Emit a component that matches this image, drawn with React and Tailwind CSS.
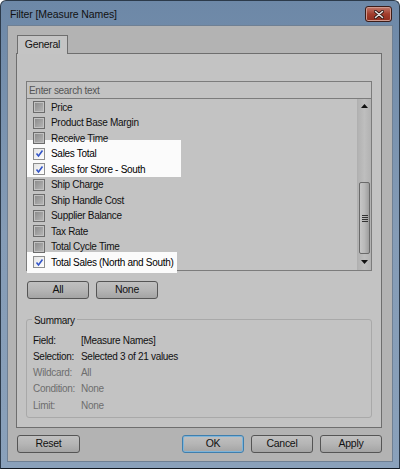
import React from "react";

const FONT = { fontFamily: '"Liberation Sans", Arial, sans-serif' };

const ITEMS = [
  { name: "Price" },
  { name: "Product Base Margin" },
  { name: "Receive Time" },
  { name: "Sales Total", checked: true },
  { name: "Sales for Store - South", checked: true },
  { name: "Ship Charge" },
  { name: "Ship Handle Cost" },
  { name: "Supplier Balance" },
  { name: "Tax Rate" },
  { name: "Total Cycle Time" },
  { name: "Total Sales (North and South)", checked: true },
];

const SUMMARY = [
  { label: "Field:", value: "[Measure Names]" },
  { label: "Selection:", value: "Selected 3 of 21 values" },
  { label: "Wildcard:", value: "All", muted: true },
  { label: "Condition:", value: "None", muted: true },
  { label: "Limit:", value: "None", muted: true },
];

function Checkbox({ checked }) {
  if (checked) {
    return (
      <span className="flex h-[12px] w-[12px] shrink-0 items-center justify-center border border-[#8e8f8f] bg-gradient-to-br from-[#e4e4e4] to-[#ffffff]">
        <svg width="9" height="9" viewBox="0 0 9 9">
          <path d="M1.5 4.5 L3.5 7 L7.5 1.5" fill="none" stroke="#3355c8" strokeWidth="1.6" />
        </svg>
      </span>
    );
  }
  return (
    <span className="flex h-[12px] w-[12px] shrink-0 items-center justify-center border border-[#6c6c6c] bg-[#c2c2c2]">
      <span className="h-[8px] w-[8px] bg-gradient-to-br from-[#8d8d8d] to-[#b3b3b3]" />
    </span>
  );
}

function Button({ children, className = "", focus }) {
  return (
    <button
      className={`flex h-[18px] items-center justify-center rounded-[3px] border bg-gradient-to-b from-[#c0c0c0] via-[#b5b5b5] to-[#a4a4a4] text-[10.5px] text-[#111] ${
        focus ? "border-[#3f7fae] shadow-[inset_0_0_0_1px_#7fb4d8]" : "border-[#555]"
      } ${className}`}
    >
      {children}
    </button>
  );
}

function Scrollbar() {
  return (
    <div className="flex w-[14px] shrink-0 flex-col border-l border-[#b0b0b0] bg-gradient-to-r from-[#b2b2b2] via-[#bebebe] to-[#b2b2b2]">
      <div className="flex h-[14px] items-center justify-center">
        <svg width="7" height="4" viewBox="0 0 7 4">
          <path d="M0 4 L3.5 0 L7 4 Z" fill="#111" />
        </svg>
      </div>
      <div className="h-[69px]" />
      <div className="mx-[1px] flex h-[72px] items-center justify-center rounded-[2px] border border-[#6a6a6a] bg-gradient-to-r from-[#c6c6c6] via-[#b9b9b9] to-[#9e9e9e]">
        <div className="flex flex-col gap-[1px]">
          <span className="h-[1px] w-[6px] bg-[#333]" />
          <span className="h-[1px] w-[6px] bg-[#333]" />
          <span className="h-[1px] w-[6px] bg-[#333]" />
          <span className="h-[1px] w-[6px] bg-[#333]" />
        </div>
      </div>
      <div className="flex flex-1 items-center justify-center">
        <svg width="7" height="4" viewBox="0 0 7 4">
          <path d="M0 0 L7 0 L3.5 4 Z" fill="#111" />
        </svg>
      </div>
    </div>
  );
}

export default function App() {
  return (
    <div
      className="relative flex h-[469px] w-[400px] flex-col overflow-hidden rounded-t-[6px] border border-[#2c3a4a] border-b-[#111820] bg-gradient-to-b from-[#6d88a7] via-[#859cb6] to-[#8aa1bb] tracking-[-0.3px]"
      style={FONT}
    >
      {/* title bar */}
      <div className="flex h-[24px] shrink-0 items-center justify-between pl-[9px] pr-[7px]">
        <span className="pt-[3px] text-[10.5px] tracking-[-0.1px] text-[#111]">Filter [Measure Names]</span>
        <div className="mt-[2px] flex h-[16px] w-[27px] items-center justify-center rounded-[3px] border border-[#3b1c18] bg-gradient-to-b from-[#c1796c] via-[#a23d2c] to-[#8e2d1d] shadow-[inset_0_0_0_1px_#cf9a8f]">
          <svg width="10" height="9" viewBox="0 0 10 9">
            <path d="M1.5 1.5 L8.5 7.5 M8.5 1.5 L1.5 7.5" stroke="#2b1511" strokeWidth="3" strokeLinecap="round" />
            <path d="M1.5 1.5 L8.5 7.5 M8.5 1.5 L1.5 7.5" stroke="#e6e2e0" strokeWidth="1.6" strokeLinecap="round" />
          </svg>
        </div>
      </div>

      {/* client area */}
      <div className="mx-[6px] mb-[6px] flex flex-1 flex-col border border-[#6f8094] bg-[#b3b3b3] px-[8px] pt-[9px]">
        {/* tab */}
        <div className="flex">
          <div className="relative z-[1] -mb-[1px] ml-[1px] flex h-[19px] w-[51px] items-center justify-center border border-b-0 border-[#6e6e6e] bg-[#c4c4c4] text-[10.5px] text-[#111]">
            General
          </div>
        </div>

        {/* tab panel */}
        <div className="flex h-[375px] w-[366px] flex-col border border-[#6e6e6e] bg-[#c3c3c3] px-[9px] pt-[27px]">
          {/* search + list */}
          <div className="flex flex-col border border-[#7c7c7c]">
            <div className="flex h-[17px] items-center border-b border-[#7c7c7c] px-[2px] text-[10px] text-[#555]">
              Enter search text
            </div>
            <div className="flex h-[171px]">
              <div className="flex flex-1 flex-col pt-[0.5px]">
                {ITEMS.map((item) => (
                  <div
                    key={item.name}
                    className="relative z-10 flex h-[15.5px] items-center gap-[6px] pl-[6px] text-[10px] text-[#111]"
                  >
                    <Checkbox checked={item.checked} />
                    <span className={item.checked ? "text-black" : ""}>{item.name}</span>
                  </div>
                ))}
              </div>
              <Scrollbar />
            </div>
          </div>

          {/* All / None */}
          <div className="mt-[10px] flex gap-[7px] pl-[1px]">
            <Button className="w-[62px]">All</Button>
            <Button className="w-[62px]">None</Button>
          </div>

          {/* summary group */}
          <div className="relative mt-[20px] h-[99px] rounded-[3px] border border-[#a9a9a9] px-[6px] pt-[12px]">
            <span className="absolute -top-[7px] left-[5px] bg-[#c3c3c3] px-[2px] text-[10px] text-[#111]">
              Summary
            </span>
            <div className="flex flex-col">
              {SUMMARY.map((row) => (
                <div
                  key={row.label}
                  className={`flex h-[16.25px] items-center text-[10px] ${row.muted ? "text-[#6e6e6e]" : "text-[#111]"}`}
                >
                  <span className="w-[48px]">{row.label}</span>
                  <span>{row.value}</span>
                </div>
              ))}
            </div>
          </div>
        </div>

        {/* bottom buttons */}
        <div className="mt-[7px] flex pr-[2px]">
          <Button className="ml-[1px] w-[63px]">Reset</Button>
          <div className="ml-auto flex gap-[7px]">
            <Button className="w-[62px]" focus>
              OK
            </Button>
            <Button className="w-[62px]">Cancel</Button>
            <Button className="w-[62px]">Apply</Button>
          </div>
        </div>
      </div>

      {/* highlight annotations */}
      <div className="absolute left-[26px] top-[139px] h-[37px] w-[154px] bg-[#fbfbfb]" />
      <div className="absolute left-[26px] top-[251px] h-[21px] w-[150px] bg-[#fbfbfb]" />
    </div>
  );
}
